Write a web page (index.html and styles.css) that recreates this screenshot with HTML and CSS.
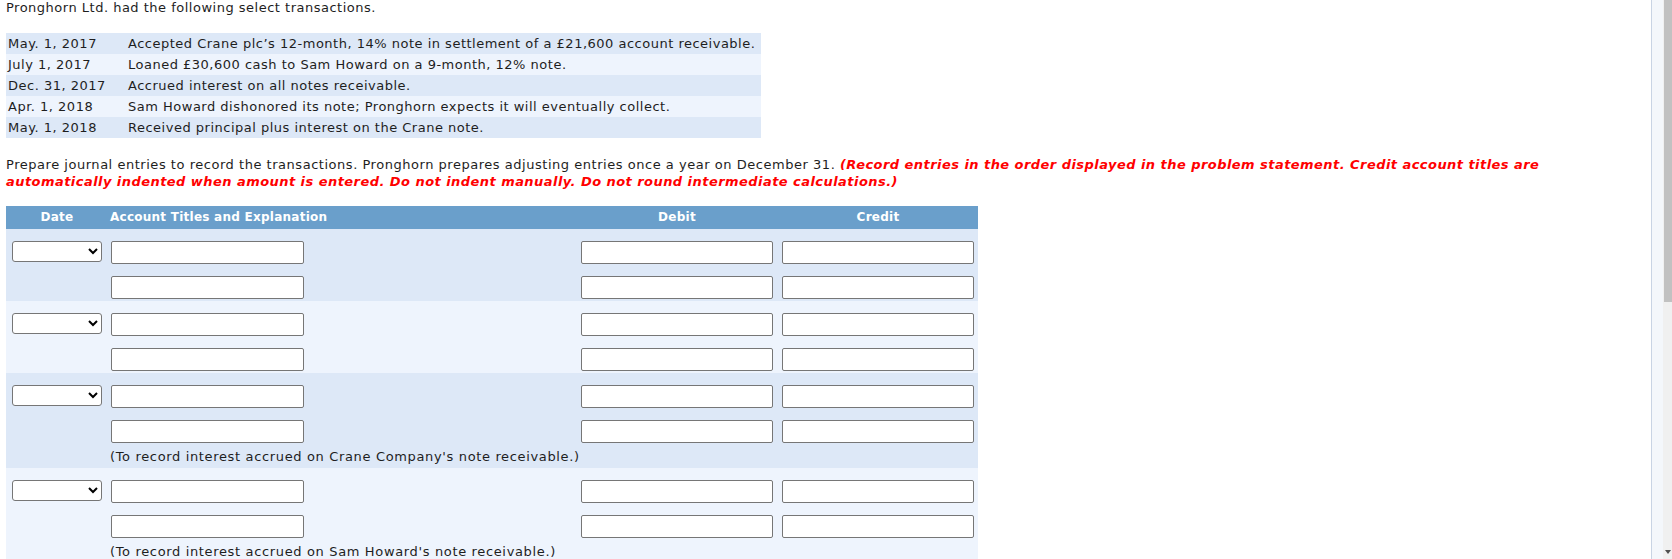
FILE: index.html
```html
<!DOCTYPE html>
<html lang="en">
<head>
<meta charset="utf-8">
<title>Pronghorn Ltd. journal entries</title>
<link rel="stylesheet" href="styles.css">
</head>
<body>
<div class="page">
  <main class="main">
    <p class="intro">Pronghorn Ltd. had the following select transactions.</p>

    <table class="tx">
      <tbody>
        <tr class="dark"><td class="tx-date">May. 1, 2017</td><td class="tx-desc">Accepted Crane plc’s 12-month, 14% note in settlement of a £21,600 account receivable.</td></tr>
        <tr class="light"><td class="tx-date">July 1, 2017</td><td class="tx-desc">Loaned £30,600 cash to Sam Howard on a 9-month, 12% note.</td></tr>
        <tr class="dark"><td class="tx-date">Dec. 31, 2017</td><td class="tx-desc">Accrued interest on all notes receivable.</td></tr>
        <tr class="light"><td class="tx-date">Apr. 1, 2018</td><td class="tx-desc">Sam Howard dishonored its note; Pronghorn expects it will eventually collect.</td></tr>
        <tr class="dark"><td class="tx-date">May. 1, 2018</td><td class="tx-desc">Received principal plus interest on the Crane note.</td></tr>
      </tbody>
    </table>

    <p class="instructions">Prepare journal entries to record the transactions. Pronghorn prepares adjusting entries once a year on December 31. <em class="warn">(Record entries in the order displayed in the problem statement. Credit account titles are<br>automatically indented when amount is entered. Do not indent manually. Do not round intermediate calculations.)</em></p>

    <div class="journal">
      <div class="jrow jhead">
        <div class="c-date hcell hc-date">Date</div>
        <div class="c-acct hcell hc-acct">Account Titles and Explanation</div>
        <div class="c-debit hcell hc-amt">Debit</div>
        <div class="c-credit hcell hc-amt">Credit</div>
      </div>

      <div class="group dark">
        <div class="jrow line">
          <div class="c-date"><select class="sel"><option></option></select></div>
          <div class="c-acct"><input class="fld fld-acct" type="text"></div>
          <div class="c-debit"><input class="fld fld-amt" type="text"></div>
          <div class="c-credit"><input class="fld fld-amt" type="text"></div>
        </div>
        <div class="jrow line">
          <div class="c-date"></div>
          <div class="c-acct"><input class="fld fld-acct" type="text"></div>
          <div class="c-debit"><input class="fld fld-amt" type="text"></div>
          <div class="c-credit"><input class="fld fld-amt" type="text"></div>
        </div>
      </div>

      <div class="group light">
        <div class="jrow line">
          <div class="c-date"><select class="sel"><option></option></select></div>
          <div class="c-acct"><input class="fld fld-acct" type="text"></div>
          <div class="c-debit"><input class="fld fld-amt" type="text"></div>
          <div class="c-credit"><input class="fld fld-amt" type="text"></div>
        </div>
        <div class="jrow line">
          <div class="c-date"></div>
          <div class="c-acct"><input class="fld fld-acct" type="text"></div>
          <div class="c-debit"><input class="fld fld-amt" type="text"></div>
          <div class="c-credit"><input class="fld fld-amt" type="text"></div>
        </div>
      </div>

      <div class="group dark">
        <div class="jrow line">
          <div class="c-date"><select class="sel"><option></option></select></div>
          <div class="c-acct"><input class="fld fld-acct" type="text"></div>
          <div class="c-debit"><input class="fld fld-amt" type="text"></div>
          <div class="c-credit"><input class="fld fld-amt" type="text"></div>
        </div>
        <div class="jrow line">
          <div class="c-date"></div>
          <div class="c-acct"><input class="fld fld-acct" type="text"></div>
          <div class="c-debit"><input class="fld fld-amt" type="text"></div>
          <div class="c-credit"><input class="fld fld-amt" type="text"></div>
        </div>
        <div class="explain">(To record interest accrued on Crane Company's note receivable.)</div>
      </div>

      <div class="group light">
        <div class="jrow line">
          <div class="c-date"><select class="sel"><option></option></select></div>
          <div class="c-acct"><input class="fld fld-acct" type="text"></div>
          <div class="c-debit"><input class="fld fld-amt" type="text"></div>
          <div class="c-credit"><input class="fld fld-amt" type="text"></div>
        </div>
        <div class="jrow line">
          <div class="c-date"></div>
          <div class="c-acct"><input class="fld fld-acct" type="text"></div>
          <div class="c-debit"><input class="fld fld-amt" type="text"></div>
          <div class="c-credit"><input class="fld fld-amt" type="text"></div>
        </div>
        <div class="explain">(To record interest accrued on Sam Howard's note receivable.)</div>
      </div>
    </div>
  </main>

  <div class="side-strip"></div>
  <div class="scrollbar">
    <div class="thumb"></div>
    <div class="track"></div>
    <div class="arrow-down"></div>
  </div>
</div>
</body>
</html>
```

FILE: styles.css
```css
html, body {
  margin: 0;
  padding: 0;
  height: 559px;
  overflow: hidden;
  background: #ffffff;
}

body {
  font-family: "DejaVu Sans", Verdana, sans-serif;
  font-size: 13px;
  letter-spacing: 0.5px;
  color: #1e1e1e;
}

.page {
  display: flex;
  height: 559px;
}

.main {
  flex: 1;
  min-width: 0;
  padding: 0 6px;
  overflow: hidden;
}

.intro {
  margin: 0;
  line-height: 16px;
}

/* transactions */
.tx {
  margin-top: 17px;
  width: 755px;
  border-collapse: collapse;
  border-spacing: 0;
}

.tx td {
  padding: 0;
  height: 21px;
  line-height: 21px;
  white-space: nowrap;
  vertical-align: middle;
}

.tx-date {
  width: 120px;
  padding-left: 2px !important;
}

.dark { background: #dde8f7; }
.light { background: #eef4fd; }

.instructions {
  margin: 18px 0 0;
  line-height: 17px;
  white-space: nowrap;
  letter-spacing: 0.53px;
}

.warn {
  color: #ff0000;
  font-weight: bold;
  font-style: italic;
  letter-spacing: 0.45px;
}

/* journal */
.journal {
  margin-top: 16px;
  width: 972px;
}

.jrow {
  display: grid;
  grid-template-columns: 102px 470px 200px 200px;
}

.jhead {
  background: #6a9fcb;
  height: 23px;
  line-height: 23px;
  color: #ffffff;
  font-weight: bold;
  font-size: 12px;
  letter-spacing: 0.25px;
}

.hc-date {
  text-align: center;
}

.hc-acct {
  padding-left: 2px;
}

.hc-amt {
  text-align: center;
  width: 192px;
}

.c-debit.hc-amt { margin-left: 3px; }
.c-credit.hc-amt { margin-left: 4px; }

.group {
  padding-bottom: 2px;
}

.line {
  padding-top: 12px;
  align-items: start;
}

.line .c-date {
  display: flex;
  justify-content: center;
}

.line .c-acct { padding-left: 3px; }
.line .c-debit { padding-left: 3px; }
.line .c-credit { padding-left: 4px; }

.sel {
  width: 90px;
  height: 21px;
  border: 1px solid #767676;
  border-radius: 3px;
  background: #ffffff;
  font-size: 12px;
  margin: 0;
}

.fld {
  display: block;
  box-sizing: border-box;
  height: 23px;
  margin: 0;
  padding: 0 3px;
  border: 1px solid #767676;
  border-radius: 2px;
  background: #ffffff;
  font-family: "DejaVu Sans", Verdana, sans-serif;
  font-size: 13px;
  letter-spacing: 0;
}

.fld-acct { width: 193px; }
.fld-amt { width: 192px; }

.explain {
  padding: 4px 0 0 104px;
  line-height: 19px;
  white-space: nowrap;
  letter-spacing: 0.65px;
}

/* right frame edge + scrollbar */
.side-strip {
  width: 11px;
  border-left: 1px solid #c9d4e4;
  background: #f4f7fb;
}

.scrollbar {
  width: 9px;
  background: #f0f0f0;
  display: flex;
  flex-direction: column;
  align-items: flex-end;
}

.thumb {
  width: 8px;
  height: 302px;
  background: #c1c1c1;
}

.track {
  flex: 1;
}

.arrow-down {
  width: 0;
  height: 0;
  margin: 0 1px 5px 0;
  border-left: 3px solid transparent;
  border-right: 3px solid transparent;
  border-top: 4px solid #505050;
}
```
